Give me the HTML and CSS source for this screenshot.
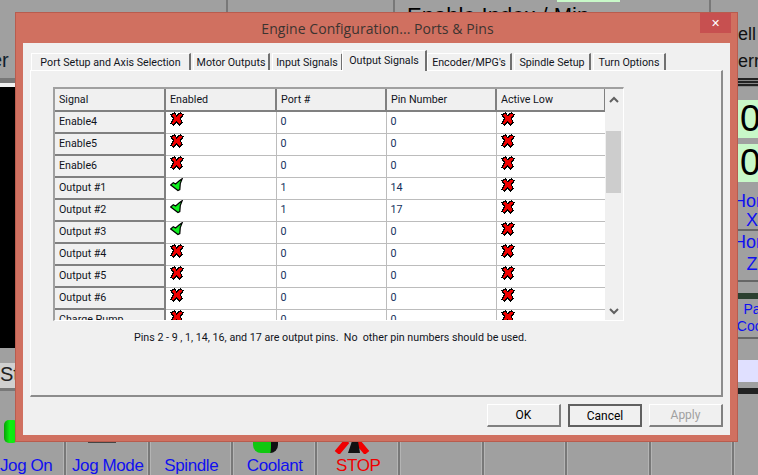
FILE: index.html
```html
<!DOCTYPE html>
<html lang="en">
<head>
<meta charset="UTF-8" />
<title>Engine Configuration... Ports &amp; Pins</title>
<link rel="stylesheet" href="styles.css">
</head>
<body>
<svg class="defs" width="0" height="0">
  <symbol id="icon-x" viewBox="0 0 15 15">
    <path d="M1 3 L5 1 L7 4 L11 1 L14 3 L11 7 L13 11 L10 14 L7 11 L4 14 L1 12 L4 7 Z" fill="#f00000" stroke="#000" stroke-width="1.3" shape-rendering="crispEdges"/>
  </symbol>
  <symbol id="icon-check" viewBox="0 0 15 15">
    <path d="M13 0.8 L11 6 L10.5 12.5 L8.5 13.5 L0.8 7.5 L3.5 5 L6 6.5 L10 3 Z" fill="#10f020" stroke="#000" stroke-width="1.3"/>
  </symbol>
</svg>

<div class="app">
  <!-- main program behind the dialog -->
  <div class="bg-top-line line1"></div>
  <div class="bg-top-line line2"></div>
  <div class="bg-top-line line3"></div>
  <div class="bg-heading">Enable Index / Min</div>
  <div class="bg-green-tab"></div>
  <div class="bg-left-word">er</div>
  <div class="bg-screen"></div>
  <div class="bg-st">St</div>
  <div class="bg-led"></div>

  <div class="bg-right">
    <div class="bg-word">ell</div>
    <div class="bg-word">err</div>
    <div class="bg-rule"></div>
    <div class="bg-dro first">0</div>
    <div class="bg-dro">0</div>
    <div class="bg-btn home-x">Hom<br>X</div>
    <div class="bg-btn home-z">Hom<br>Z</div>
    <div class="bg-dark"></div>
    <div class="bg-btn small">Pa<br>Coor</div>
    <div class="bg-lav"></div>
    <div class="bg-rule2"></div>
  </div>

  <div class="bg-bottom">
    <div class="bg-key key-first">Jog On</div>
    <div class="bg-key">Jog Mode<span class="shadow"></span></div>
    <div class="bg-key">Spindle</div>
    <div class="bg-key">Coolant<span class="cyl"></span></div>
    <div class="bg-key stop">STOP
      <svg class="stop-mark" width="40" height="14" viewBox="0 0 40 14">
        <path d="M3 13 L13 1 M33 13 L23 1" stroke="#f00000" stroke-width="6" fill="none"/>
        <path d="M14 13 L18 1 L24 1 L26 13 Z" fill="#111"/>
      </svg>
    </div>
    <div class="bg-key"></div>
    <div class="bg-key"></div>
    <div class="bg-key"></div>
    <div class="bg-key"></div>
  </div>

  <!-- dialog -->
  <div class="dialog">
    <div class="titlebar">
      <span class="title">Engine Configuration... Ports &amp; Pins</span>
      <span class="close">&#10005;</span>
    </div>
    <div class="client">
      <div class="tabs">
        <div class="tab w-port">Port Setup and Axis Selection</div>
        <div class="tab w-motor">Motor Outputs</div>
        <div class="tab w-input">Input Signals</div>
        <div class="tab active w-output">Output Signals</div>
        <div class="tab w-enc">Encoder/MPG's</div>
        <div class="tab w-spin">Spindle Setup</div>
        <div class="tab w-turn">Turn Options</div>
      </div>
      <div class="panel">
        <div class="grid-box">
          <div class="grid-clip">
            <table class="grid">
              <thead>
                <tr><th>Signal</th><th>Enabled</th><th>Port #</th><th>Pin Number</th><th>Active Low</th></tr>
              </thead>
              <tbody>
                <tr><th>Enable4</th><td><svg class="ico"><use href="#icon-x"/></svg></td><td>0</td><td>0</td><td><svg class="ico"><use href="#icon-x"/></svg></td></tr>
                <tr><th>Enable5</th><td><svg class="ico"><use href="#icon-x"/></svg></td><td>0</td><td>0</td><td><svg class="ico"><use href="#icon-x"/></svg></td></tr>
                <tr><th>Enable6</th><td><svg class="ico"><use href="#icon-x"/></svg></td><td>0</td><td>0</td><td><svg class="ico"><use href="#icon-x"/></svg></td></tr>
                <tr><th>Output #1</th><td><svg class="ico"><use href="#icon-check"/></svg></td><td>1</td><td>14</td><td><svg class="ico"><use href="#icon-x"/></svg></td></tr>
                <tr><th>Output #2</th><td><svg class="ico"><use href="#icon-check"/></svg></td><td>1</td><td>17</td><td><svg class="ico"><use href="#icon-x"/></svg></td></tr>
                <tr><th>Output #3</th><td><svg class="ico"><use href="#icon-check"/></svg></td><td>0</td><td>0</td><td><svg class="ico"><use href="#icon-x"/></svg></td></tr>
                <tr><th>Output #4</th><td><svg class="ico"><use href="#icon-x"/></svg></td><td>0</td><td>0</td><td><svg class="ico"><use href="#icon-x"/></svg></td></tr>
                <tr><th>Output #5</th><td><svg class="ico"><use href="#icon-x"/></svg></td><td>0</td><td>0</td><td><svg class="ico"><use href="#icon-x"/></svg></td></tr>
                <tr><th>Output #6</th><td><svg class="ico"><use href="#icon-x"/></svg></td><td>0</td><td>0</td><td><svg class="ico"><use href="#icon-x"/></svg></td></tr>
                <tr><th>Charge Pump</th><td><svg class="ico"><use href="#icon-x"/></svg></td><td>0</td><td>0</td><td><svg class="ico"><use href="#icon-x"/></svg></td></tr>
              </tbody>
            </table>
          </div>
          <div class="scrollbar">
            <svg class="arrow" width="18" height="22" viewBox="0 0 18 22"><path d="M5 13 L9 9 L13 13" fill="none" stroke="#606060" stroke-width="2"/></svg>
            <div class="track"><div class="thumb"></div></div>
            <svg class="arrow" width="18" height="18" viewBox="0 0 18 18"><path d="M5 7 L9 11 L13 7" fill="none" stroke="#606060" stroke-width="2"/></svg>
          </div>
        </div>
        <p class="note">Pins 2 - 9 , 1, 14, 16, and 17 are output pins.&nbsp; No&nbsp; other pin numbers should be used.</p>
      </div>
      <div class="buttons">
        <button class="btn">OK</button>
        <button class="btn default">Cancel</button>
        <button class="btn disabled">Apply</button>
      </div>
    </div>
  </div>
</div>
</body>
</html>
```

FILE: styles.css
```css
body {
  margin: 0;
  padding: 0;
  font-family: "Liberation Sans", Arial, sans-serif;
}

.defs {
  position: absolute;
}

.app {
  position: relative;
  width: 758px;
  height: 475px;
  background: #a0a0a0;
  overflow: hidden;
}

/* main program behind the dialog */
.bg-top-line {
  position: absolute;
  top: 0;
  width: 2px;
  height: 40px;
  background: #787878;
}

.line1 { left: 226px; }
.line2 { left: 393px; }
.line3 { left: 709px; }

.bg-heading {
  position: absolute;
  left: 407px;
  top: 3px;
  font-size: 22px;
  color: #000;
  white-space: nowrap;
}

.bg-green-tab {
  position: absolute;
  left: 557px;
  top: 0;
  width: 63px;
  height: 2px;
  background: #c8f8c8;
}

.bg-left-word {
  position: absolute;
  left: -9px;
  top: 49px;
  font-size: 20px;
  color: #10202c;
}

.bg-screen {
  position: absolute;
  left: 0;
  top: 83px;
  width: 20px;
  height: 265px;
  background: #000;
  border-top: 4px solid #f0f0f0;
  box-shadow: 0 -5px 0 #787878;
  box-sizing: border-box;
}

.bg-st {
  position: absolute;
  left: 0;
  top: 363px;
  width: 20px;
  height: 25px;
  background: #d0d0d0;
  box-shadow: 0 3px 0 #787878;
  font-size: 20px;
  line-height: 22px;
  color: #222;
  overflow: hidden;
}

.bg-led {
  position: absolute;
  left: 4px;
  top: 420px;
  width: 14px;
  height: 23px;
  border-radius: 5px;
  background: linear-gradient(90deg, #08a008, #10f010 40%, #10e010);
}

.bg-right {
  position: absolute;
  left: 738px;
  top: 0;
  width: 20px;
  height: 400px;
  display: flex;
  flex-direction: column;
  overflow: hidden;
  padding-top: 21px;
  box-sizing: border-box;
}

.bg-word {
  font-size: 18px;
  line-height: 27px;
  height: 27px;
  white-space: nowrap;
  color: #111;
  flex: none;
}

.bg-rule {
  height: 9px;
  margin-top: 3px;
  background: repeating-linear-gradient(#222 0 2px, #888 2px 3px);
  flex: none;
}

.bg-dro {
  height: 38px;
  margin-top: 6px;
  background: #c8f8c8;
  font-size: 37px;
  line-height: 38px;
  color: #000;
  padding-left: 2px;
  flex: none;
}

.bg-dro.first {
  margin-top: 13px;
}

.bg-btn {
  flex: none;
  width: 44px;
  margin-left: -8px;
  text-align: center;
  font-size: 18px;
  color: #1010f0;
  border-bottom: 2px solid #666;
  box-sizing: border-box;
}

.home-x {
  margin-top: 10px;
  height: 39px;
  line-height: 19px;
}

.home-z {
  height: 51px;
  line-height: 22px;
}

.bg-btn.small {
  height: 38px;
  margin-top: 2px;
  font-size: 14px;
  line-height: 17px;
}

.bg-dark {
  flex: none;
  height: 6px;
  margin-top: 11px;
  background: #2c4030;
}

.bg-lav {
  flex: none;
  height: 22px;
  margin-top: 21px;
  background: #e0e0ff;
}

.bg-rule2 {
  flex: none;
  height: 6px;
  margin-top: 6px;
  background: #222;
}

.bg-bottom {
  position: absolute;
  left: 0;
  top: 400px;
  height: 75px;
  display: flex;
}

.bg-key {
  position: relative;
  flex: none;
  width: 83.5px;
  height: 75px;
  border-right: 2px solid #787878;
  box-shadow: inset -1px 0 0 #b4b4b4, 1px 0 0 #b4b4b4;
  text-align: center;
  font-size: 17px;
  letter-spacing: -0.4px;
  line-height: 20px;
  padding: 56px 0 0 2px;
  box-sizing: border-box;
  color: #1010f0;
  white-space: nowrap;
}

.key-first {
  width: 66px;
  padding: 56px 14px 0 0;
}

.bg-key.stop {
  color: #f00000;
}

.shadow {
  position: absolute;
  left: 22px;
  top: 41px;
  width: 28px;
  height: 2px;
  background: #444;
}

.cyl {
  position: absolute;
  left: 20px;
  top: 41px;
  width: 25px;
  height: 12px;
  background: #10c810;
  border-radius: 0 0 8px 8px;
  border-right: 7px solid #111;
  box-sizing: border-box;
}

.stop-mark {
  position: absolute;
  left: 17px;
  top: 40px;
}

/* dialog */
.dialog {
  position: absolute;
  left: 15px;
  top: 12px;
  width: 723px;
  height: 430px;
  background: #d07060;
  border: 1px solid #b85c4e;
  box-sizing: border-box;
  padding: 0 7px 6px 7px;
  display: flex;
  flex-direction: column;
}

.titlebar {
  position: relative;
  flex: none;
  height: 30px;
  display: flex;
  align-items: center;
  justify-content: center;
}

.title {
  font-family: "Open Sans", sans-serif;
  font-size: 14px;
  letter-spacing: 0.05px;
  color: #3c3430;
  margin: 1px 0 0 2px;
}

.close {
  position: absolute;
  right: -1px;
  top: 0;
  width: 31px;
  height: 20px;
  background: #c75050;
  color: #fff;
  font-size: 11px;
  line-height: 20px;
  text-align: center;
}

.client {
  flex: 1;
  background: #f0f0f0;
  padding: 7px 7px 0 7px;
  display: flex;
  flex-direction: column;
  font-family: Roboto, sans-serif;
  font-size: 10.7px;
  color: #10141c;
}

.tabs {
  display: flex;
  align-items: flex-end;
  height: 20px;
  padding-left: 1px;
  gap: 2px;
  position: relative;
  z-index: 1;
}

.tab {
  height: 17px;
  box-sizing: border-box;
  background: #f0f0f0;
  border-top: 1px solid #fff;
  border-left: 1px solid #fff;
  border-right: 2px solid #707070;
  text-align: center;
  line-height: 17px;
  white-space: nowrap;
}

.tab.active {
  height: 21px;
  margin: 0 -2px -1px -3px;
  line-height: 19px;
  text-align: center;
}

.w-port { width: 160px; }
.w-motor { width: 77px; }
.w-input { width: 71px; }
.w-output { width: 85px; }
.w-enc { width: 85px; }
.w-spin { width: 77px; }
.w-turn { width: 73px; }

.panel {
  flex: none;
  height: 327px;
  box-sizing: border-box;
  border-top: 1px solid #fff;
  border-left: 1px solid #fff;
  border-right: 2px solid #8c8c8c;
  border-bottom: 2px solid #8c8c8c;
  padding: 16px 0 0 22px;
}

.grid-box {
  display: flex;
  width: 571px;
  height: 234px;
  border-top: 2px solid #a0a0a0;
  border-left: 2px solid #a0a0a0;
  border-right: 1px solid #fff;
  border-bottom: 1px solid #fff;
  box-sizing: border-box;
}

.grid-clip {
  width: 551px;
  overflow: hidden;
}

.grid {
  border-collapse: collapse;
  table-layout: fixed;
  width: 551px;
}

.grid th,
.grid td {
  height: 22px;
  box-sizing: border-box;
  padding: 0 0 2px 4px;
  text-align: left;
  font-weight: normal;
  white-space: nowrap;
  overflow: hidden;
  border-right: 1px solid #bcbcbc;
  border-bottom: 1px solid #bcbcbc;
  background: #fff;
}

.grid th {
  background: #f0f0f0;
  border-right: 2px solid #808080;
  border-bottom: 2px solid #808080;
}

.grid thead th {
  height: 22px;
  padding-bottom: 0;
}

.grid tbody td {
  color: #14305c;
}

.grid th:nth-child(1) { width: 110px; }
.grid th:nth-child(2) { width: 111px; }
.grid th:nth-child(3) { width: 110px; }
.grid th:nth-child(4) { width: 110px; }

.ico {
  display: block;
  width: 14px;
  height: 14px;
  margin: -5px 0 0 0;
}

.scrollbar {
  flex: 1;
  background: #f0f0f0;
  display: flex;
  flex-direction: column;
}

.arrow {
  display: block;
  flex: none;
}

.track {
  flex: 1;
  padding: 20px 2px 0 1px;
}

.thumb {
  height: 62px;
  background: #cdcdcd;
}

.note {
  margin: 10px 0 0 81px;
  white-space: nowrap;
}

.buttons {
  display: flex;
  justify-content: flex-end;
  gap: 7px;
  padding: 7px 0 0;
}

.btn {
  width: 74px;
  height: 23px;
  padding: 0;
  background: #f0f0f0;
  border: 1px solid;
  border-color: #fff #808080 #808080 #fff;
  border-bottom-width: 2px;
  border-right-width: 2px;
  font-family: inherit;
  font-size: 12px;
  color: #000;
}

.btn.default {
  border: 2px solid #606060;
}

.btn.disabled {
  color: #a0a0a0;
}
```
